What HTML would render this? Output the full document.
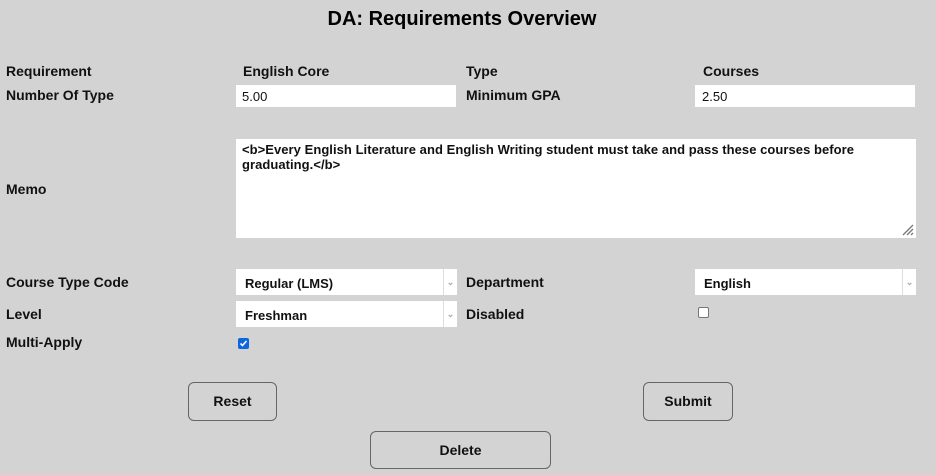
<!DOCTYPE html>
<html><head><meta charset="utf-8"><style>
body{margin:0;width:936px;height:475px;background:#d3d3d3;font-family:"Liberation Sans",sans-serif;position:relative;overflow:hidden;color:#111}
.a{position:absolute;white-space:nowrap}
.l{font-weight:bold;font-size:14px;line-height:16px}
.box{position:absolute;background:#fff}
.sel{position:absolute;background:#fff;font-weight:bold;font-size:13px}
.sel span{position:absolute;left:9px;top:7px}
.sel i{position:absolute;right:0;top:0;bottom:0;width:13px;border-left:1px solid #ddd;color:#aaa;font-style:normal;font-size:9px;text-align:center;line-height:26px}
.btn{position:absolute;border:1px solid #666;border-radius:6px;font-weight:bold;font-size:14px;text-align:center;box-sizing:border-box}
.cb{position:absolute;width:11px;height:11px;border-radius:2px;box-sizing:border-box}
</style></head><body>
<div class="a" style="left:0;width:924px;text-align:center;top:7px;font-size:20px;font-weight:bold;line-height:24px;color:#000">DA: Requirements Overview</div>
<div class="a l" style="left:6px;top:63px">Requirement</div>
<div class="a l" style="left:243px;top:63px">English Core</div>
<div class="a l" style="left:466px;top:63px">Type</div>
<div class="a l" style="left:703px;top:63px">Courses</div>
<div class="a l" style="left:6px;top:87px">Number Of Type</div>
<div class="box" style="left:236px;top:85px;width:220px;height:22px"><span class="a" style="left:6px;top:4px;font-size:13px">5.00</span></div>
<div class="a l" style="left:466px;top:87px">Minimum GPA</div>
<div class="box" style="left:695px;top:85px;width:220px;height:22px"><span class="a" style="left:7px;top:4px;font-size:13px">2.50</span></div>
<div class="a l" style="left:6px;top:181px">Memo</div>
<div class="box" style="left:236px;top:139px;width:680px;height:99px">
<div class="a" style="left:6px;top:3px;font-size:13px;font-weight:bold;line-height:15px;white-space:normal;width:660px;letter-spacing:0.05px">&lt;b&gt;Every English Literature and English Writing student must take and pass these courses before graduating.&lt;/b&gt;</div>
<svg class="a" style="right:2px;bottom:2px" width="12" height="12"><path d="M11 1L1 11M11 5L5 11M11 9L9 11" stroke="#777" stroke-width="1.3"/></svg>
</div>
<div class="a l" style="left:6px;top:274px">Course Type Code</div>
<div class="sel" style="left:236px;top:269px;width:221px;height:26px"><span>Regular (LMS)</span><i>⌄</i></div>
<div class="a l" style="left:466px;top:274px">Department</div>
<div class="sel" style="left:695px;top:269px;width:221px;height:26px"><span>English</span><i>⌄</i></div>
<div class="a l" style="left:6px;top:306px">Level</div>
<div class="sel" style="left:236px;top:301px;width:221px;height:26px"><span>Freshman</span><i>⌄</i></div>
<div class="a l" style="left:466px;top:306px">Disabled</div>
<div class="cb" style="left:698px;top:307px;border:1px solid #767676;background:#fff"></div>
<div class="a l" style="left:6px;top:334px">Multi-Apply</div>
<div class="cb" style="left:238px;top:338px;background:#0b67e0"><svg class="a" style="left:0;top:0" width="11" height="11"><path d="M2.5 5.5L4.5 7.5L8.5 3" stroke="#fff" stroke-width="1.6" fill="none"/></svg></div>
<div class="btn" style="left:188px;top:382px;width:89px;height:39px;line-height:37px">Reset</div>
<div class="btn" style="left:643px;top:382px;width:90px;height:39px;line-height:37px">Submit</div>
<div class="btn" style="left:370px;top:431px;width:181px;height:38px;line-height:36px">Delete</div>
</body></html>
